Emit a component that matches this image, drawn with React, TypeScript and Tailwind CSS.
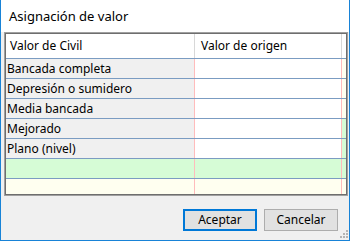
import React from "react";

const rows: { label: string; strip: string }[] = [
  { label: "Bancada completa", strip: "bg-[#fffff0]" },
  { label: "Depresión o sumidero", strip: "bg-[#fffff0]" },
  { label: "Media bancada", strip: "bg-[#fffff0]" },
  { label: "Mejorado", strip: "bg-[#d6fcd6]" },
  { label: "Plano (nivel)", strip: "bg-[#d6fcd6]" },
];

function Grip() {
  const dots = [
    [9, 1], [9, 4], [9, 7], [6, 4], [6, 7], [3, 7],
  ];
  return (
    <svg width="11" height="10" viewBox="0 0 11 10" className="absolute right-[1px] bottom-[1px]">
      {dots.map(([x, y], i) => (
        <rect key={i} x={x} y={y} width="2" height="2" fill="#b4b4b4" />
      ))}
    </svg>
  );
}

export default function App() {
  return (
    <div
      className="relative w-[350px] h-[241px] bg-[#f0f0f0] border-l border-r border-b border-[#1883d7] flex flex-col text-[12px] text-black"
      style={{ fontFamily: '"Segoe UI", "Noto Sans", sans-serif' }}
    >
      <div className="h-[32px] bg-white flex items-center pl-[8px] shrink-0">
        <span className="leading-none text-[13px]">Asignación de valor</span>
      </div>
      <div className="pl-[3px] pr-[1px]">
        <div className="h-[164px] border border-[#a0a0a0]">
          <div className="h-full border border-[#6e6e6e] flex flex-col overflow-hidden">
            <div className="h-[25px] shrink-0 flex bg-white border-b border-[#7b9cc2]">
              <div className="w-[188px] pl-[4px] flex items-center">Valor de Civil</div>
              <div className="w-px bg-[#d8d8d8]" />
              <div className="w-[146px] pl-[6px] flex items-center">Valor de origen</div>
              <div className="w-px bg-[#d8d8d8]" />
              <div className="flex-1" />
            </div>
            {rows.map((r) => (
              <div key={r.label} className="h-[20px] shrink-0 flex border-b border-[#7b9cc2]">
                <div className="w-[188px] bg-[#f0f0f0] pl-[1px] flex items-center">{r.label}</div>
                <div className="w-px bg-[#ffbcbc]" />
                <div className="w-[146px] bg-white" />
                <div className="w-px bg-[#ffbcbc]" />
                <div className={`flex-1 ${r.strip}`} />
              </div>
            ))}
            <div className="h-[20px] shrink-0 flex bg-[#d6fcd6] border-b border-[#7b9cc2]">
              <div className="w-[188px]" />
              <div className="w-px bg-[#ffbcbc]" />
              <div className="w-[146px]" />
              <div className="w-px bg-[#ffbcbc]" />
              <div className="flex-1" />
            </div>
            <div className="flex-1 flex bg-[#fffff0]">
              <div className="w-[188px]" />
              <div className="w-px bg-[#ffbcbc]" />
              <div className="w-[146px]" />
              <div className="w-px bg-[#ffbcbc]" />
              <div className="flex-1" />
            </div>
          </div>
        </div>
      </div>
      <div className="flex justify-end gap-[7px] pr-[11px] pt-[13px]">
        <button className="w-[74px] h-[22px] bg-[#e1e1e1] border-2 border-[#0078d7] flex items-center justify-center leading-none">
          Aceptar
        </button>
        <button className="w-[74px] h-[22px] bg-[#e1e1e1] border border-[#adadad] flex items-center justify-center leading-none">
          Cancelar
        </button>
      </div>
      <Grip />
    </div>
  );
}
